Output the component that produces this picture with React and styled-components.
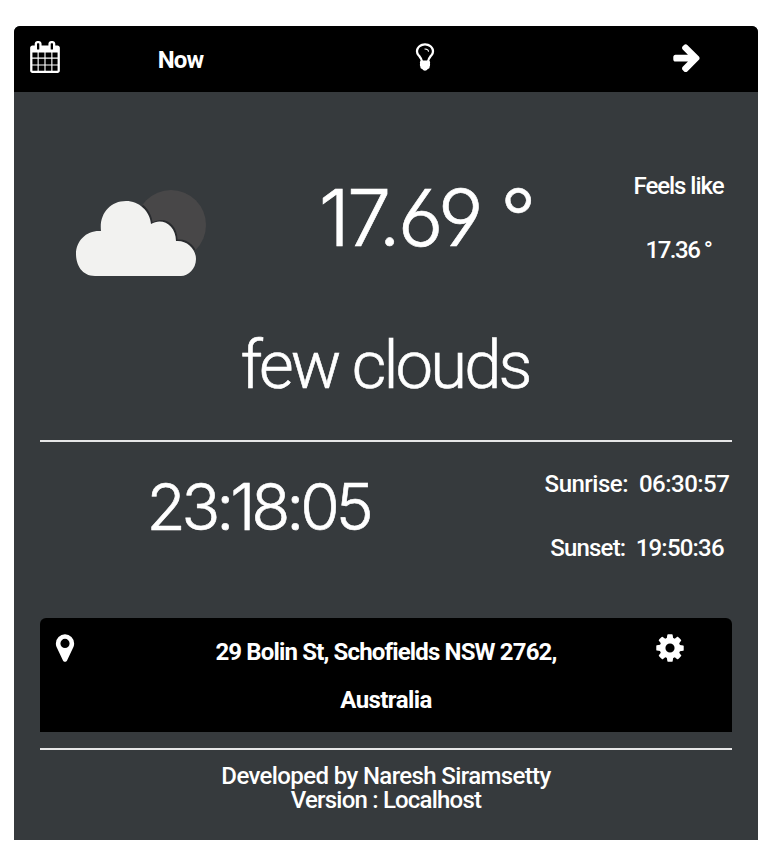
import React from "react";
import styled, { createGlobalStyle } from "styled-components";

const GlobalStyle = createGlobalStyle`
  * { box-sizing: border-box; }
  body { margin: 0; background: #fff; }
`;

const Page = styled.main`
  padding: 26px 12px 14px 14px;
  color: #fff;
  font-family: Roboto, "Liberation Sans", sans-serif;
`;

const Card = styled.article`
  height: 814px;
  background: #363a3d;
  border-radius: 6px 6px 0 0;
  overflow: hidden;
`;

const Header = styled.header`
  display: grid;
  grid-template-columns: 61px 211px 278px 1fr;
  height: 66px;
  background: #000;
`;

const HeaderCell = styled.div`
  display: flex;
  justify-content: center;
  padding-left: ${(p) => p.$indent || 0}px;
  padding-top: ${(p) => p.$top || 0}px;
`;

const Body = styled.div`
  display: flex;
  flex-direction: column;
  padding: 61px 26px 0;
`;

const Label = styled.span`
  display: block;
  font-size: 24px;
  font-weight: ${(p) => p.$weight || 500};
  line-height: ${(p) => p.$line || 64}px;
  letter-spacing: ${(p) => p.$spacing || 0}px;
  text-align: center;
  white-space: pre;
`;

const Display = styled.div`
  font-family: ${(p) => p.$family || "Inter"}, sans-serif;
  font-feature-settings: "calt" 0, "cv03" 1, "cv04" 1;
  font-size: ${(p) => p.$size}px;
  font-weight: 300;
  line-height: ${(p) => p.$line}px;
  letter-spacing: ${(p) => p.$spacing}px;
  padding-right: ${(p) => p.$inset || 0}px;
  text-align: center;
  white-space: pre;
  -webkit-text-stroke: 0.6px #fff;
`;

const Current = styled.section`
  display: grid;
  grid-template-columns: 202px 369px 1fr;
  height: 128px;
`;

const CloudCell = styled.div`
  padding: 33px 0 0 32px;
`;

const FeelsLike = styled.div`
  padding-top: 1px;
  padding-left: 14px;
`;

const Summary = styled.section`
  height: 159px;
`;

const Rule = styled.hr`
  width: 100%;
  height: 2px;
  margin: 0;
  border: 0;
  background: #e6e6e7;
`;

const Times = styled.section`
  display: grid;
  grid-template-columns: 440px 1fr;
  height: 176px;
  padding-top: 10px;
`;

const SunTimes = styled.div`
  padding-left: 60px;
  margin-right: -2px;
`;

const Location = styled.section`
  display: grid;
  grid-template-columns: 49px 594px 1fr;
  height: 114px;
  margin-bottom: 16px;
  padding-top: 10px;
  background: #000;
  border-radius: 6px 6px 0 0;
`;

const IconCell = styled.div`
  display: flex;
  justify-content: center;
  padding-top: 4px;
  margin-left: ${(p) => p.$shift || 0}px;
`;

const Footer = styled.footer`
  padding-top: 14px;
`;

const Icon = styled.svg`
  display: block;
  flex: none;
  width: 32px;
  height: 32px;
  fill: #fff;
  overflow: visible;
`;

const CloudArt = styled.svg`
  display: block;
  width: 138px;
  height: 96px;
`;

const paths = {
  calendar:
    "M192 1664h288v-288h-288v288zm352 0h320v-288h-320v288zm-352-352h288v-320h-288v320zm352 0h320v-320h-320v320zm-352-384h288v-288h-288v288zm736 736h320v-288h-320v288zm-384-736h320v-288h-320v288zm768 736h288v-288h-288v288zm-384-352h320v-320h-320v320zm-352-864v-288q0-13-9.5-22.5t-22.5-9.5h-64q-13 0-22.5 9.5t-9.5 22.5v288q0 13 9.5 22.5t22.5 9.5h64q13 0 22.5-9.5t9.5-22.5zm736 864h288v-320h-288v320zm-384-384h320v-288h-320v288zm384 0h288v-288h-288v288zm32-480v-288q0-13-9.5-22.5t-22.5-9.5h-64q-13 0-22.5 9.5t-9.5 22.5v288q0 13 9.5 22.5t22.5 9.5h64q13 0 22.5-9.5t9.5-22.5zm384-64v1280q0 52-38 90t-90 38h-1408q-52 0-90-38t-38-90v-1280q0-52 38-90t90-38h128v-96q0-66 47-113t113-47h64q66 0 113 47t47 113v96h384v-96q0-66 47-113t113-47h64q66 0 113 47t47 113v96h128q52 0 90 38t38 90z",
  bulb:
    "M1120 576q0 13-9.5 22.5t-22.5 9.5-22.5-9.5-9.5-22.5q0-46-54-71t-106-25q-13 0-22.5-9.5t-9.5-22.5 9.5-22.5 22.5-9.5q50 0 99.5 16t87 54 37.5 90zm160 0q0-72-34.5-134t-90-101.5-123-62-136.5-22.5-136.5 22.5-123 62-90 101.5-34.5 134q0 101 68 180 10 11 30.5 33t30.5 33q128 153 141 298h228q13-145 141-298 10-11 30.5-33t30.5-33q68-79 68-180zm128 0q0 155-103 268-45 49-74.5 87t-59.5 95.5-34 107.5q47 28 47 82 0 37-25 64 25 27 25 64 0 52-45 81 13 23 13 47 0 46-31.5 71t-77.5 25q-20 44-60 70t-87 26-87-26-60-70q-46 0-77.5-25t-31.5-71q0-24 13-47-45-29-45-81 0-37 25-64-25-27-25-64 0-54 47-82-4-50-34-107.5t-59.5-95.5-74.5-87q-103-113-103-268 0-99 44.5-184.5t117-142 164-89 186.5-32.5 186.5 32.5 164 89 117 142 44.5 184.5z",
  bulbBase: "M670 1090H1122Q1165 1120 1165 1180V1350Q1165 1440 1100 1490L1000 1590H792L692 1490Q627 1440 627 1350V1180Q627 1120 670 1090z",
  arrow:
    "M1600 960q0 54-37 91l-651 651q-39 37-91 37-51 0-90-37l-75-75q-38-38-38-91t38-91l293-293h-704q-52 0-84.5-37.5t-32.5-90.5v-128q0-53 32.5-90.5t84.5-37.5h704l-293-294q-38-36-38-90t38-90l75-75q38-38 90-38 53 0 91 38l651 651q37 35 37 90z",
  marker:
    "M1152 640q0-106-75-181t-181-75-181 75-75 181 75 181 181 75 181-75 75-181zm256 0q0 109-33 179l-364 774q-16 33-47.5 52t-67.5 19-67.5-19-46.5-52l-365-774q-33-70-33-179 0-212 150-362t362-150 362 150 150 362z",
  gear:
    "M1152 896q0-106-75-181t-181-75-181 75-75 181 75 181 181 75 181-75 75-181zm512-109v222q0 12-8 23t-20 13l-185 28q-19 54-39 91 35 50 107 138 10 12 10 25t-9 23q-27 37-99 108t-94 71q-12 0-26-9l-138-108q-44 23-91 38-16 136-29 186-7 28-36 28h-222q-14 0-24.5-8.5t-11.5-21.5l-28-184q-49-16-90-37l-141 107q-10 9-25 9-14 0-25-11-126-114-165-168-7-10-7-23 0-12 8-23 15-21 51-66.5t54-70.5q-27-50-41-99l-183-27q-13-2-21-12.5t-8-23.5v-222q0-12 8-23t19-13l186-28q14-46 39-92-40-57-107-138-10-12-10-24 0-10 9-23 26-36 98.5-107.5t94.5-71.5q13 0 26 10l138 107q44-23 91-38 16-136 29-186 7-28 36-28h222q14 0 24.5 8.5t11.5 21.5l28 184q49 16 90 37l142-107q9-9 24-9 13 0 25 10 129 119 165 170 7 8 7 22 0 12-8 23-15 21-51 66.5t-54 70.5q26 50 41 98l183 28q13 2 21 12.5t8 23.5z",
};

const Glyph = ({ name }) => (
  <Icon viewBox="0 0 1792 1792" aria-hidden="true">
    <path d={paths[name]} />
    {name === "bulb" && <path d={paths.bulbBase} />}
  </Icon>
);

const cloudPath =
  "M23 90 C10 90 4 79 4 68 C4 55 14 45 27 45 H29 C27 28 38 15 54 15 C67 15 78 25 79 38 C90 31 104 39 104 55 C115 54 124 63 124 73 C124 83 116 90 109 90 Z";

const FewClouds = () => (
  <CloudArt viewBox="0 0 138 96" role="img" aria-label="few clouds">
    <circle cx="99" cy="39" r="35" fill="#484748" />
    <path d={cloudPath} fill="#292b2e" transform="translate(1.5 -1.5)" clipPath="url(#sunClip)" />
    <clipPath id="sunClip">
      <circle cx="97.5" cy="40.5" r="34.5" />
    </clipPath>
    <path d={cloudPath} fill="#f2f2f0" />
  </CloudArt>
);

export default function App() {
  return (
    <>
      <GlobalStyle />
      <Page>
        <Card>
          <Header>
            <HeaderCell $top={15}><Glyph name="calendar" /></HeaderCell>
            <HeaderCell $top={2}><Label $weight={700} $spacing={-0.8}>Now</Label></HeaderCell>
            <HeaderCell $top={15}><Glyph name="bulb" /></HeaderCell>
            <HeaderCell $top={15} $indent={52}><Glyph name="arrow" /></HeaderCell>
          </Header>
          <Body>
            <Current>
              <CloudCell><FewClouds /></CloudCell>
              <Display $size={79} $line={129} $spacing={-2.8} $inset={1}>17.69 °</Display>
              <FeelsLike>
                <Label $spacing={-1.05}>Feels like</Label>
                <Label $spacing={-1.5}>17.36 °</Label>
              </FeelsLike>
            </Current>
            <Summary>
              <Display $family="Roboto" $size={67} $line={169} $spacing={-2.9} $inset={2}>few clouds</Display>
            </Summary>
            <Rule />
            <Times>
              <Display $size={64} $line={110} $spacing={-4.1} $inset={4}>23:18:05</Display>
              <SunTimes>
                <Label $spacing={-0.5}>Sunrise:  06:30:57</Label>
                <Label $spacing={-0.8}>Sunset:  19:50:36</Label>
              </SunTimes>
            </Times>
            <Location>
              <IconCell><Glyph name="marker" /></IconCell>
              <div>
                <Label $line={48} $weight={700} $spacing={-0.85}>29 Bolin St, Schofields NSW 2762,</Label>
                <Label $line={48} $weight={700} $spacing={-0.6}>Australia</Label>
              </div>
              <IconCell $shift={-76}><Glyph name="gear" /></IconCell>
            </Location>
            <Rule />
            <Footer>
              <Label $line={24} $spacing={-0.62}>Developed by Naresh Siramsetty</Label>
              <Label $line={24} $spacing={-0.8}>Version : Localhost</Label>
            </Footer>
          </Body>
        </Card>
      </Page>
    </>
  );
}
